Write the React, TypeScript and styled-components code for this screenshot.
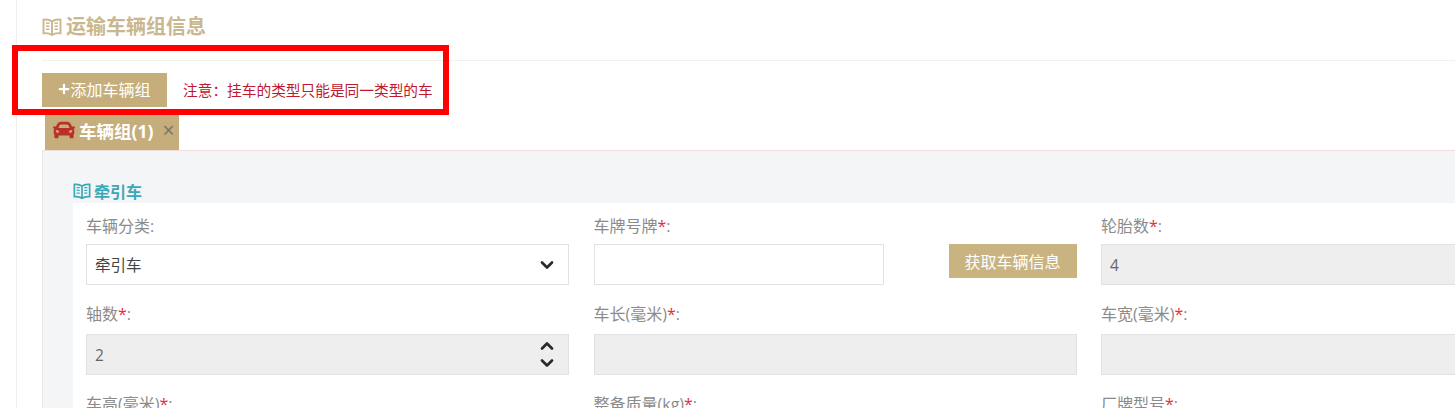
import styled, { createGlobalStyle } from 'styled-components';
import { FaCar, FaPlus } from 'react-icons/fa';
import { ChevronDown, ChevronUp } from 'lucide-react';

const GlobalStyle = createGlobalStyle`
  html, body {
    margin: 0;
    padding: 0;
    background: #fff;
    overflow: hidden;
    font-family: "Open Sans", "Noto Sans CJK SC", sans-serif;
  }
`;

const Page = styled.div`
  position: relative;
  width: 1455px;
  height: 408px;
  overflow: hidden;
  padding-left: 16px;
  box-sizing: border-box;
`;

const Content = styled.div`
  height: 408px;
  border-left: 1px solid #eeeeee;
  padding-left: 25px;
  overflow: hidden;
`;

const Header = styled.div`
  height: 60px;
  box-sizing: content-box;
  border-bottom: 1px solid #f0f0f0;
  display: flex;
  align-items: flex-start;
  gap: 4px;
  color: #c9b78f;
  font-size: 20px;
  line-height: 54px;
  font-weight: 700;
`;

const HeaderIcon = styled.span`
  display: flex;
  height: 54px;
  align-items: center;
`;

const Toolbar = styled.div`
  display: flex;
  align-items: center;
  gap: 16px;
  margin-top: 12px;
`;

const AddButton = styled.div`
  width: 125px;
  height: 34px;
  padding-bottom: 2px;
  box-sizing: border-box;
  background: #c5ae7c;
  color: #fff;
  font-size: 16px;
  display: flex;
  align-items: center;
  justify-content: center;
`;

const Notice = styled.span`
  color: #c0182e;
  font-size: 14.7px;
  margin-bottom: 2px;
`;

const TabBar = styled.div`
  display: flex;
  margin: 8px 0 0 3px;
`;

const Tab = styled.div`
  width: 134px;
  height: 35px;
  box-sizing: border-box;
  padding: 0 0 5px 8px;
  background: #c5ae7c;
  display: flex;
  align-items: center;
  color: #fff;
  font-size: 17.5px;
  font-weight: 700;
`;

const TabLabel = styled.span`
  margin-left: 4px;
  white-space: nowrap;
`;

const TabClose = styled.span`
  margin-left: 9px;
  color: #77736a;
  font-size: 21px;
  font-weight: 400;
`;

const Panel = styled.div`
  background: #f4f5f7;
  border-top: 1px solid #f3dcdc;
  border-left: 1px solid #e9e6e0;
  padding: 30px 0 0 30px;
  height: 260px;
`;

const SectionTitle = styled.div`
  display: flex;
  align-items: center;
  gap: 3px;
  height: 22px;
  padding-bottom: 2px;
  box-sizing: border-box;
  color: #3aa9b5;
  font-size: 16px;
  font-weight: 700;
`;

const Form = styled.div`
  background: #fff;
  padding: 13px 0 0 13px;
  display: grid;
  grid-template-columns: repeat(3, 483px);
  align-content: start;
  column-gap: 24.5px;
  row-gap: 19px;
  height: 220px;
`;

const Field = styled.div`
  display: flex;
  flex-direction: column;
`;

const Label = styled.div<{ $gap?: number }>`
  height: 20px;
  line-height: 20px;
  margin-bottom: ${(props) => props.$gap ?? 8}px;
  color: #8b8b8b;
  font-size: 16px;
  white-space: nowrap;
`;

const Required = styled.span`
  color: #e0313b;
`;

const Input = styled.div<{ $disabled?: boolean }>`
  height: 41px;
  box-sizing: border-box;
  border: 1px solid #e2e2e2;
  background: ${(props) => (props.$disabled ? '#eeeeee' : '#ffffff')};
  color: ${(props) => (props.$disabled ? '#666666' : '#444444')};
  padding: 0 8px;
  display: flex;
  align-items: center;
  justify-content: space-between;
  font-size: 15.5px;
`;

const PlateRow = styled.div`
  display: flex;
  justify-content: space-between;
  align-items: flex-start;
`;

const PlateInput = styled(Input)`
  width: 290px;
`;

const FetchButton = styled.div`
  width: 128px;
  height: 34px;
  background: #c9b481;
  color: #fff;
  font-size: 16px;
  display: flex;
  align-items: center;
  justify-content: center;
`;

const Spinner = styled.div`
  display: flex;
  flex-direction: column;
  align-items: center;
  color: #2a2a2a;
  margin-right: 3px;
`;

const SpinnerUp = styled(ChevronUp)`
  margin-bottom: -3px;
`;

const HighlightBox = styled.div`
  position: absolute;
  left: 12px;
  top: 45px;
  width: 437px;
  height: 70px;
  box-sizing: border-box;
  border: 6px solid #ff0000;
`;

const Book = ({ size }: { size: number }) => (
  <svg width={size} height={size * 0.9} viewBox="0 0 20 18" fill="none" stroke="currentColor" strokeWidth="1.9">
    <path d="M10 3.5C8 1.8 4.5 1.3 1.5 1.6V15.2C4.5 14.9 8 15.4 10 17C12 15.4 15.5 14.9 18.5 15.2V1.6C15.5 1.3 12 1.8 10 3.5V17" />
    <path d="M4 5.2H7.5M4 8.2H7.5M4 11.2H7.5M12.5 5.2H16M12.5 8.2H16M12.5 11.2H16" strokeWidth="1.5" />
  </svg>
);

const Req = () => <Required>*</Required>;

const App = () => (
  <>
    <GlobalStyle />
    <Page>
      <Content>
        <Header>
          <HeaderIcon>
            <Book size={20} />
          </HeaderIcon>
          运输车辆组信息
        </Header>
        <Toolbar>
          <AddButton>
            <FaPlus size={12} />
            添加车辆组
          </AddButton>
          <Notice>注意：挂车的类型只能是同一类型的车</Notice>
        </Toolbar>
        <TabBar>
          <Tab>
            <FaCar size={22} color="#bb2f2a" />
            <TabLabel>车辆组(1)</TabLabel>
            <TabClose>×</TabClose>
          </Tab>
        </TabBar>
        <Panel>
          <SectionTitle>
            <Book size={18} />
            牵引车
          </SectionTitle>
          <Form>
            <Field>
              <Label>车辆分类:</Label>
              <Input>
                牵引车
                <Spinner>
                  <ChevronDown size={20} strokeWidth={3.2} />
                </Spinner>
              </Input>
            </Field>
            <Field>
              <Label>
                车牌号牌
                <Req />:
              </Label>
              <PlateRow>
                <PlateInput />
                <FetchButton>获取车辆信息</FetchButton>
              </PlateRow>
            </Field>
            <Field>
              <Label>
                轮胎数
                <Req />:
              </Label>
              <Input $disabled>4</Input>
            </Field>
            <Field>
              <Label $gap={10}>
                轴数
                <Req />:
              </Label>
              <Input $disabled>
                2
                <Spinner>
                  <SpinnerUp size={20} strokeWidth={3.2} />
                  <ChevronDown size={20} strokeWidth={3.2} />
                </Spinner>
              </Input>
            </Field>
            <Field>
              <Label $gap={10}>
                车长(毫米)
                <Req />:
              </Label>
              <Input $disabled />
            </Field>
            <Field>
              <Label $gap={10}>
                车宽(毫米)
                <Req />:
              </Label>
              <Input $disabled />
            </Field>
            <Field>
              <Label>
                车高(毫米)
                <Req />:
              </Label>
            </Field>
            <Field>
              <Label>
                整备质量(kg)
                <Req />:
              </Label>
            </Field>
            <Field>
              <Label>
                厂牌型号
                <Req />:
              </Label>
            </Field>
          </Form>
        </Panel>
      </Content>
      <HighlightBox />
    </Page>
  </>
);

export default App;
